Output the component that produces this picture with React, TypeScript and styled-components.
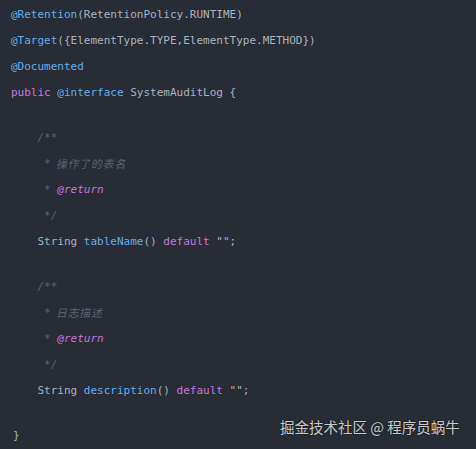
import React from "react";
import styled, { createGlobalStyle } from "styled-components";

const Global = createGlobalStyle`
  html, body { margin: 0; padding: 0; background: #282c34; }
  #root { width: 476px; height: 449px; }
`;

const Page = styled.div`
  position: relative;
  width: 476px;
  height: 449px;
  overflow: hidden;
  background: #282c34;
`;

const Code = styled.div`
  display: flex;
  flex-direction: column;
  padding: 1px 0 0 11px;
  font-family: "DejaVu Sans Mono", "Noto Sans CJK SC", monospace;
  font-size: 11px;
  color: #abb2bf;
  white-space: pre;
`;

const Line = styled.div<{ $blank?: boolean; $indent?: number }>`
  height: ${(p) => (p.$blank ? 19 : 26)}px;
  display: flex;
  align-items: center;
  padding-left: ${(p) => (p.$indent ?? 0) * 6.62}px;
`;

type Kind = "plain" | "anno" | "kw" | "fn" | "comment" | "tag" | "cjk";

const colors: Record<Kind, string> = {
  plain: "#abb2bf",
  anno: "#61afef",
  kw: "#c678dd",
  fn: "#61afef",
  comment: "#5c6370",
  tag: "#c678dd",
  cjk: "#5c6370",
};

const Tok = styled.span<{ $k: Kind }>`
  color: ${(p) => colors[p.$k]};
  font-style: ${(p) => (p.$k === "comment" || p.$k === "tag" ? "italic" : "normal")};
  font-family: ${(p) =>
    p.$k === "cjk"
      ? `"Noto Sans CJK SC", sans-serif`
      : `"DejaVu Sans Mono", monospace`};
  letter-spacing: ${(p) => (p.$k === "cjk" ? "0.7px" : "0")};
  display: ${(p) => (p.$k === "cjk" ? "inline-block" : "inline")};
  transform: ${(p) => (p.$k === "cjk" ? "skewX(-12deg)" : "none")};
`;

const Watermark = styled.div`
  position: absolute;
  left: 280px;
  top: 418px;
  font-family: "Noto Sans CJK SC", sans-serif;
  font-size: 14.5px;
  line-height: 18px;
  color: rgba(225, 225, 225, 0.88);
  text-shadow: 0 0 2px rgba(0, 0, 0, 0.6);
  white-space: pre;
`;

type T = [Kind, string];
type L = { indent?: number; toks?: T[] };

const lines: L[] = [
  { toks: [["anno", "@Retention"], ["plain", "(RetentionPolicy.RUNTIME)"]] },
  { toks: [["anno", "@Target"], ["plain", "({ElementType.TYPE,ElementType.METHOD})"]] },
  { toks: [["anno", "@Documented"]] },
  { toks: [["kw", "public "], ["anno", "@interface"], ["plain", " SystemAuditLog {"]] },
  {},
  { indent: 4, toks: [["comment", "/**"]] },
  { indent: 5, toks: [["comment", "* "], ["cjk", "操作了的表名"]] },
  { indent: 5, toks: [["comment", "* "], ["tag", "@return"]] },
  { indent: 5, toks: [["comment", "*/"]] },
  { indent: 4, toks: [["plain", "String "], ["fn", "tableName"], ["plain", "() "], ["kw", "default"], ["plain", " \"\";"]] },
  {},
  { indent: 4, toks: [["comment", "/**"]] },
  { indent: 5, toks: [["comment", "* "], ["cjk", "日志描述"]] },
  { indent: 5, toks: [["comment", "* "], ["tag", "@return"]] },
  { indent: 5, toks: [["comment", "*/"]] },
  { indent: 4, toks: [["plain", "String "], ["fn", "description"], ["plain", "() "], ["kw", "default"], ["plain", " \"\";"]] },
  {},
  { indent: 0.3, toks: [["plain", "}"]] },
];

export default function App() {
  return (
    <>
      <Global />
      <Page>
        <Code>
          {lines.map((l, i) => (
            <Line key={i} $blank={!l.toks} $indent={l.indent}>
              {l.toks?.map(([k, s], j) => (
                <Tok key={j} $k={k}>
                  {s}
                </Tok>
              ))}
            </Line>
          ))}
        </Code>
        <Watermark>掘金技术社区 @ 程序员蜗牛</Watermark>
      </Page>
    </>
  );
}
